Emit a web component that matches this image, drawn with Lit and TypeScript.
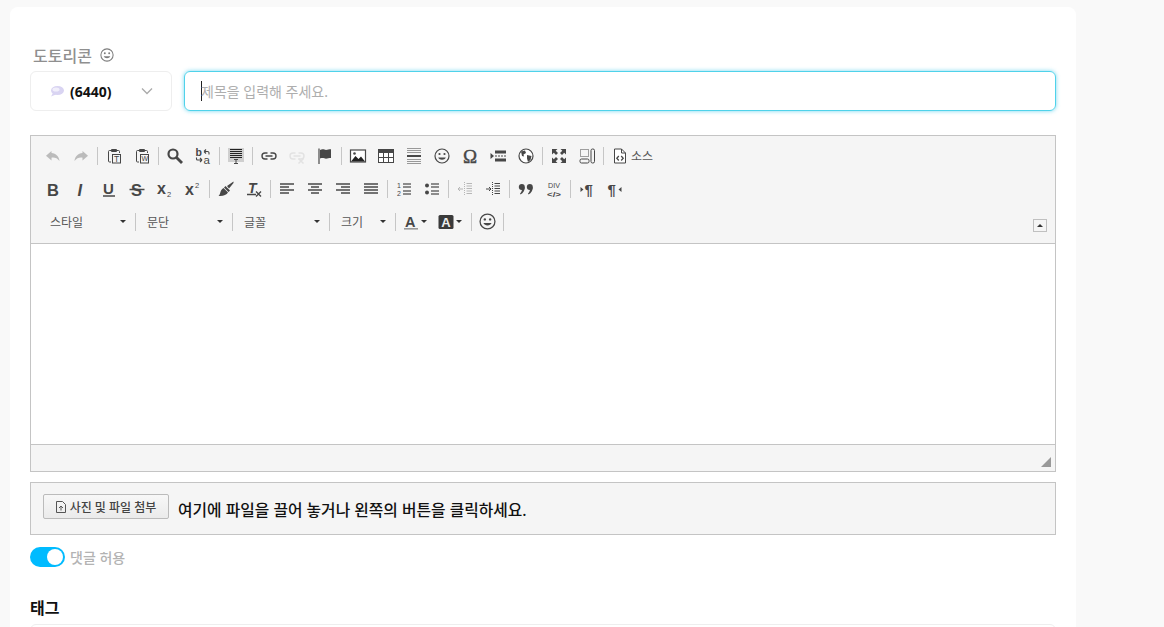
import { LitElement, html, svg, css } from "lit";
import { customElement } from "lit/decorators.js";

const C = "#474747";
const lines = (ys: number[], x1 = 1, x2 = 15, w = 1.5, c = C) =>
  ys.map((y) => svg`<line x1=${x1} x2=${x2} y1=${y} y2=${y} stroke=${c} stroke-width=${w} />`);
const glyph = (t: string, x: number, y: number, size: number, extra = "") =>
  svg`<text x=${x} y=${y} font-size=${size} fill=${C} font-family="Liberation Sans, sans-serif" style=${extra}>${t}</text>`;
const clip = svg`<path d="M5 2.500H3.500a1 1 0 0 0-1 1V13a1 1 0 0 0 1 1H5M11 2.500h1.500a1 1 0 0 1 1 1V5" fill="none" stroke=${C} /><rect x="5" y="1" width="6" height="3" rx="1" fill=${C} /><rect x="6.500" y="6.500" width="8" height="8.500" fill="#f5f5f5" stroke=${C} />`;
const chain = svg`<path d="M6.500 5H4a2.800 2.800 0 0 0 0 6h2.500M9.500 5H12a2.800 2.800 0 0 1 0 6H9.500M4.500 8h7" fill="none" stroke="currentColor" stroke-width="1.400" />`;
const smile = svg`<circle cx="8" cy="8" r="7" fill="none" stroke=${C} stroke-width="1.200" /><circle cx="5.500" cy="6" r="1.100" fill=${C} /><circle cx="10.500" cy="6" r="1.100" fill=${C} /><path d="M4.200 9.500c1 3 6.600 3 7.600 0z" fill=${C} />`;

const ICONS: Record<string, unknown> = {
  undo: svg`<path d="M6.500 3 1 7.800l5.500 4.700V9.700c3.500-.4 5.800.6 8 3.300-.6-4.600-3.500-7.400-8-7.900z" fill=${C} />`,
  redo: svg`<path d="M9.500 3 15 7.800l-5.500 4.700V9.700c-3.500-.4-5.800.6-8 3.300.6-4.600 3.500-7.400 8-7.900z" fill=${C} />`,
  pasteText: svg`${clip}${glyph("T", 8, 13.500, 8.500)}`,
  pasteWord: svg`${clip}${glyph("W", 7.400, 13.300, 7)}`,
  find: svg`<circle cx="6" cy="6" r="4.500" fill="none" stroke=${C} stroke-width="2.200" /><path d="M9.500 9.500 15 15" stroke=${C} stroke-width="2.800" />`,
  replace: svg`${glyph("b", 0.500, 8, 10.500, "font-weight:700")}${glyph("a", 8.500, 16, 11.500)}<path d="M9 3.500h3.500a1.500 1.500 0 0 1 1.500 1.500v1.500M9 3.500 11 1.500M9 3.500 11 5.500M1.500 9.500V11a1 1 0 0 0 1 1H7M7 12 5 10M7 12 5 14" fill="none" stroke=${C} stroke-width="1.100" />`,
  selectAll: svg`<rect x="0" y="0" width="16" height="14" fill="#cfcfcf" />${lines([1.500, 3.500, 5.500, 7.500, 9.500], 2, 14, 1, "#222")}<path d="M6 15.500h4M8 11.500v4M6 11.500h4" stroke=${C} />`,
  link: svg`<g color=${C}>${chain}</g>`,
  unlink: svg`<g color="#bdbdbd">${chain}</g><path d="M9.500 10.500 14.500 15.500M14.500 10.500 9.500 15.500" stroke="#bdbdbd" stroke-width="1.500" />`,
  flag: svg`<path d="M2 0.500V16" stroke=${C} stroke-width="1.200" /><path d="M3 2c3-1.500 4.500 0 6 0s3-.7 5-.7V10c-2 0-3.500.7-5 .7S6 9.500 3 10.500z" fill=${C} />`,
  image: svg`<rect x="0.500" y="2" width="15" height="12" fill="#fff" stroke=${C} stroke-width="1.200" /><path d="M1 13.500 5.500 8l3 3 2.500-2.500 4 5z" fill="#222" /><circle cx="4.500" cy="5.500" r="1.300" fill=${C} />`,
  table: svg`<rect x="0.500" y="1.500" width="15" height="13" fill="#fff" stroke=${C} /><rect x="0.500" y="1.500" width="15" height="3.500" fill=${C} /><path d="M5.500 5v9.500M10.500 5v9.500M1 9.500h14" stroke=${C} />`,
  hr: svg`${lines([0.500, 2.500, 4.500], 1, 15, 1, "#999")}${lines([8], 1, 15, 2, C)}${lines([11.500, 13.500, 15.500], 1, 15, 1, "#999")}`,
  smiley: smile,
  omega: svg`<text x="8" y="14.500" text-anchor="middle" font-size="19" fill=${C} stroke=${C} stroke-width="0.400" font-family="Liberation Serif, serif">Ω</text>`,
  pagebreak: svg`<path d="M0.500 5 4 8l-3.500 3z" fill=${C} /><rect x="5" y="2.500" width="11" height="3" fill=${C} /><rect x="5" y="10.500" width="11" height="3" fill=${C} /><path d="M5 8h11" stroke=${C} stroke-dasharray="2 1" />`,
  globe: svg`<circle cx="8" cy="8" r="7" fill="#fff" stroke=${C} stroke-width="1.200" /><path d="M3 3.500 7 2.500 8 5 5.500 6.500 6 8.500 4 8zM9 7l4.500 1-1 4-2.500 2-1-3.500z" fill=${C} />`,
  maximize: svg`<path d="M1 1h5.500L4.700 2.800 7 5 5 7 2.800 4.700 1 6.500zM15 1v5.500l-1.800-1.800L11 7 9 5l2.300-2.200L9.500 1zM1 15V9.500l1.800 1.800L5 9l2 2-2.300 2.200L6.500 15zM15 15H9.500l1.800-1.800L9 11l2-2 2.200 2.300L15 9.500z" fill=${C} />`,
  blocks: svg`<path d="M1.500 1.500h8v7h-8z" fill="none" stroke=${C} stroke-dasharray="1 1" /><rect x="1" y="11" width="9" height="4" rx="1.500" fill="none" stroke=${C} /><rect x="12" y="1" width="3.500" height="14" rx="1.500" fill="none" stroke=${C} />`,
  source: svg`<path d="M2.500 1h7l4 4v10h-11z" fill="#fff" stroke=${C} /><path d="M9.500 1v4h4" fill="none" stroke=${C} /><path d="M6.800 8 4.800 10.300l2 2.200M9.200 8l2 2.300-2 2.200" fill="none" stroke=${C} stroke-width="1.300" />`,
  bold: glyph("B", 2, 14.500, 16.500, "font-weight:700"),
  italic: glyph("I", 4.500, 14.500, 16.500, "font-weight:700;font-style:italic"),
  underline: svg`${glyph("U", 2, 12.500, 15, "font-weight:700")}<path d="M2 15h12" stroke=${C} stroke-width="1.500" />`,
  strike: svg`${glyph("S", 2, 14.500, 16.500, "font-weight:700")}<path d="M0.500 8.500h15" stroke=${C} stroke-width="1.500" />`,
  sub: svg`${glyph("x", 0, 12.500, 16, "font-weight:700")}${glyph("2", 10, 15.500, 7.500)}`,
  sup: svg`${glyph("x", 0, 14, 16, "font-weight:700")}${glyph("2", 10, 7, 7.500)}`,
  brush: svg`<path d="M15.500 0.500 9 5 11 7.500 15.500 2zM7.500 5 12 9.500 10.500 11 6 6.500zM5.500 7 10 11.500C8.500 14 5 15.500 0.500 15c2.500-2 1-5.500 5-8z" fill=${C} />`,
  removeFormat: svg`${glyph("T", 2, 11.500, 14, "font-weight:700;font-style:italic")}<path d="M1 13.500h9" stroke=${C} stroke-width="1.500" /><path d="M10 10.500 15 15.500M15 10.500 10 15.500" stroke=${C} stroke-width="1.400" />`,
  alignLeft: lines([3, 9], 1, 15).concat(lines([6, 12], 1, 10)),
  alignCenter: lines([3, 9], 1, 15).concat(lines([6, 12], 4, 12)),
  alignRight: lines([3, 9], 1, 15).concat(lines([6, 12], 6, 15)),
  alignBlock: lines([3, 6, 9, 12], 1, 15),
  ol: svg`${glyph("1", 1, 7, 7)}${glyph("2", 1, 14.500, 7)}${lines([3, 6, 10, 13], 7, 15, 1.200)}`,
  ul: svg`<circle cx="3" cy="4.500" r="2" fill=${C} /><circle cx="3" cy="11.500" r="2" fill=${C} />${lines([3, 6, 10, 13], 7, 15, 1.200)}`,
  outdent: svg`<g opacity="0.350"><path d="M7.500 1v14" stroke=${C} stroke-dasharray="1 1" />${lines([2.500, 5, 7.500, 10, 12.500], 9.500, 15, 1)}<path d="M1 8h5M1 8l2-2M1 8l2 2" fill="none" stroke=${C} /></g>`,
  indent: svg`<path d="M7.500 1v14" stroke=${C} stroke-dasharray="1 1" />${lines([2.500, 5, 7.500, 10, 12.500], 9.500, 15, 1)}<path d="M1 8h5M6 8 4 6M6 8l-2 2" fill="none" stroke=${C} />`,
  quote: svg`<circle cx="3.800" cy="6" r="3" fill=${C} /><path d="M6.800 6c0 3.500-1.500 6-4.300 7.500L2 12.500C3.500 11 4 9.500 4 8z" fill=${C} /><circle cx="11.800" cy="6" r="3" fill=${C} /><path d="M14.800 6c0 3.500-1.500 6-4.300 7.500l-.5-1c1.500-1.500 2-3 2-4.500z" fill=${C} />`,
  div: svg`<text x="2" y="6.800" font-size="7.500" fill=${C} font-family="Liberation Sans, sans-serif" textLength="12" lengthAdjust="spacingAndGlyphs">DIV</text><text x="1" y="15.800" font-size="7.500" font-weight="700" fill=${C} font-family="Liberation Sans, sans-serif" textLength="14" lengthAdjust="spacingAndGlyphs">&lt;/&gt;</text>`,
  ltr: svg`<path d="M1.500 6 4.500 8.500 1.500 11z" fill=${C} />${glyph("¶", 5.500, 14, 15, "font-weight:700")}`,
  rtl: svg`${glyph("¶", 0.500, 14, 15, "font-weight:700")}<path d="M14.500 6 11.500 8.500 14.500 11z" fill=${C} />`,
  textColor: svg`${glyph("A", 2, 12.500, 14.500, "font-weight:700")}<rect x="1" y="14" width="14" height="1.600" fill="#999" />`,
  bgColor: svg`<rect x="0.500" y="1" width="15" height="14" rx="1.500" fill="#3a3a3a" /><text x="8" y="13" text-anchor="middle" font-size="13" font-weight="700" fill="#eee" font-family="Liberation Sans, sans-serif">A</text>`,
};

const ROW1 = [
  ["undo", "redo"],
  ["pasteText", "pasteWord"],
  ["find", "replace"],
  ["selectAll"],
  ["link", "unlink", "flag"],
  ["image", "table", "hr", "smiley", "omega", "pagebreak", "globe"],
  ["maximize", "blocks"],
];
const ROW2 = [
  ["bold", "italic", "underline", "strike", "sub", "sup"],
  ["brush", "removeFormat"],
  ["alignLeft", "alignCenter", "alignRight", "alignBlock"],
  ["ol", "ul"],
  ["outdent", "indent"],
  ["quote", "div"],
  ["ltr", "rtl"],
];
const COMBOS = [
  ["스타일", 92],
  ["문단", 92],
  ["글꼴", 92],
  ["크기", 61],
];
const DISABLED = ["undo", "redo", "unlink"];

@customElement("app-root")
export class AppRoot extends LitElement {
  static styles = css`
    :host {
      display: block;
      height: 627px;
      overflow: hidden;
      background: #f9f9f9;
      font-family: "Noto Sans", "Noto Sans CJK KR", sans-serif;
    }
    .card {
      box-sizing: border-box;
      width: 1066px;
      height: 640px;
      margin-left: 10px;
      padding: 36px 20px 0;
      position: relative;
      top: 7px;
      background: #fff;
      border-radius: 8px;
    }
    .label {
      box-sizing: border-box;
      display: flex;
      align-items: center;
      gap: 8px;
      height: 28px;
      padding: 0 0 4px 3px;
      font-size: 16px;
      font-weight: 500;
      color: #8f8f8f;
    }
    .label svg {
      width: 14px;
      height: 14px;
      opacity: 0.7;
    }
    .title-row {
      display: flex;
      gap: 12px;
      height: 40px;
    }
    .select {
      box-sizing: border-box;
      width: 142px;
      display: flex;
      align-items: center;
      padding-left: 19px;
      border: 1px solid #eee;
      border-radius: 6px;
      font-size: 14px;
      font-weight: 700;
      color: #111;
    }
    .select .bubble {
      width: 14px;
      height: 12px;
      margin-right: 6px;
    }
    .select .chev {
      width: 12px;
      height: 8px;
      margin-left: 29px;
    }
    .input {
      flex: 1;
      box-sizing: border-box;
      display: flex;
      align-items: center;
      padding-left: 16px;
      border: 1px solid #4fd2ea;
      border-radius: 6px;
      box-shadow: 0 0 4px rgba(60, 200, 235, 0.7);
      font-size: 14px;
      color: #aeaeae;
    }
    .caret {
      width: 1px;
      height: 20px;
      margin-right: -1px;
      background: #222;
    }
    .editor {
      margin-top: 24px;
      border: 1px solid #c4c4c4;
    }
    .toolbar {
      padding: 3px 0 5px 8px;
      background: #f5f5f5;
      border-bottom: 1px solid #c4c4c4;
    }
    .row {
      display: flex;
      align-items: center;
      height: 33px;
    }
    .btn {
      width: 28px;
      display: flex;
      justify-content: center;
    }
    .btn svg {
      width: 16px;
      height: 16px;
      overflow: visible;
    }
    .btn.off svg {
      opacity: 0.33;
    }
    .sep {
      flex: none;
      width: 1px;
      height: 18px;
      margin: 0 2px;
      background: #c6c6c6;
    }
    .source-text {
      margin-left: -3px;
      font-size: 12px;
      color: #555;
    }
    .combo {
      box-sizing: border-box;
      display: flex;
      align-items: center;
      justify-content: space-between;
      padding: 0 7px 0 9px;
      font-size: 12px;
      color: #555;
    }
    .combo.first {
      margin-left: 2px;
    }
    .arrow {
      width: 0;
      height: 0;
      border: 3px solid transparent;
      border-top: 3px solid #333;
      border-bottom: 0;
    }
    .color {
      box-sizing: border-box;
      width: 35px;
      display: flex;
      align-items: center;
      gap: 2px;
      padding-left: 5px;
    }
    .color svg {
      width: 16px;
      height: 16px;
    }
    .color.second {
      width: 36px;
    }
    .emoji {
      width: 27px;
      display: flex;
      justify-content: center;
    }
    .emoji svg {
      width: 17px;
      height: 17px;
    }
    .collapse {
      box-sizing: border-box;
      width: 14px;
      height: 13px;
      margin: 0 8px 6px auto;
      align-self: flex-end;
      display: flex;
      align-items: center;
      justify-content: center;
      border: 1px solid #c0c0c0;
    }
    .collapse i {
      width: 0;
      height: 0;
      border: 3px solid transparent;
      border-bottom: 3px solid #333;
      border-top: 0;
    }
    .content {
      height: 200px;
      background: #fff;
    }
    .footer {
      box-sizing: border-box;
      height: 27px;
      display: flex;
      justify-content: flex-end;
      align-items: flex-end;
      padding: 0 4px 4px 0;
      background: #f5f5f5;
      border-top: 1px solid #c4c4c4;
    }
    .footer svg {
      width: 10px;
      height: 10px;
    }
    .attach {
      box-sizing: border-box;
      height: 53px;
      margin-top: 10px;
      display: flex;
      align-items: center;
      gap: 9px;
      padding-left: 12px;
      background: #f5f5f5;
      border: 1px solid #c4c4c4;
      font-size: 15.8px;
      font-weight: 500;
      color: #111;
    }
    .attach-text {
      margin-top: 2px;
    }
    .attach-btn {
      box-sizing: border-box;
      width: 126px;
      height: 25px;
      margin-top: -4px;
      padding-top: 1px;
      display: flex;
      align-items: center;
      justify-content: center;
      gap: 4px;
      background: linear-gradient(#f7f7f7, #ebebeb);
      border: 1px solid #bbb;
      border-radius: 2px;
      font-size: 12px;
      font-weight: 500;
      color: #444;
    }
    .attach-btn svg {
      width: 10px;
      height: 12px;
    }
    .toggle-row {
      display: flex;
      align-items: center;
      gap: 5px;
      margin-top: 12px;
      font-size: 14px;
      font-weight: 500;
      color: #b3b3b3;
    }
    .toggle {
      box-sizing: border-box;
      width: 35px;
      height: 20px;
      display: flex;
      justify-content: flex-end;
      align-items: center;
      padding-right: 2px;
      background: #00bbff;
      border-radius: 10px;
    }
    .toggle i {
      width: 16px;
      height: 16px;
      background: #fff;
      border-radius: 50%;
    }
    .tag-title {
      margin-top: 30px;
      font-size: 16px;
      font-weight: 700;
      line-height: 22px;
      color: #111;
    }
    .tag-input {
      height: 40px;
      margin-top: 5px;
      border: 1px solid #eee;
      border-radius: 6px;
    }
  `;

  icon(name: string) {
    return html`<span class="btn ${DISABLED.includes(name) ? "off" : ""}"
      ><svg viewBox="0 0 16 16">${ICONS[name]}</svg></span
    >`;
  }

  renderGroups(groups: string[][]) {
    return groups.map(
      (g, i) => html`${i ? html`<span class="sep"></span>` : ""}${g.map((n) => this.icon(n))}`
    );
  }

  render() {
    return html`
      <div class="card">
        <div class="label">
          도토리콘
          <svg viewBox="0 0 16 16">${ICONS.smiley}</svg>
        </div>
        <div class="title-row">
          <div class="select">
            <svg class="bubble" viewBox="0 0 14 12">
              <ellipse cx="7.500" cy="5.500" rx="6.500" ry="4.500" fill="#d9d4f2" />
              <path d="M3 8 1 11.500 6 9.500z" fill="#d9d4f2" />
              <ellipse cx="6" cy="4.500" rx="3.500" ry="2" fill="#f1effb" />
            </svg>
            (6440)
            <svg class="chev" viewBox="0 0 12 8">
              <path d="M1 1.500 6 6.500 11 1.500" fill="none" stroke="#aaa" stroke-width="1.300" />
            </svg>
          </div>
          <div class="input"><span class="caret"></span>제목을 입력해 주세요.</div>
        </div>
        <div class="editor">
          <div class="toolbar">
            <div class="row">
              ${this.renderGroups(ROW1)}
              <span class="sep"></span>
              ${this.icon("source")}
              <span class="source-text">소스</span>
            </div>
            <div class="row">${this.renderGroups(ROW2)}</div>
            <div class="row">
              ${COMBOS.map(
                ([t, w], i) => html`<span
                    class="combo ${i ? "" : "first"}"
                    style="width:${w}px"
                    >${t}<i class="arrow"></i></span
                  ><span class="sep"></span>`
              )}
              <span class="color"
                ><svg viewBox="0 0 16 16">${ICONS.textColor}</svg><i class="arrow"></i
              ></span>
              <span class="color second"
                ><svg viewBox="0 0 16 16">${ICONS.bgColor}</svg><i class="arrow"></i
              ></span>
              <span class="sep"></span>
              <span class="emoji"><svg viewBox="0 0 16 16">${ICONS.smiley}</svg></span>
              <span class="sep"></span>
              <span class="collapse"><i></i></span>
            </div>
          </div>
          <div class="content"></div>
          <div class="footer">
            <svg viewBox="0 0 10 10"><path d="M10 0V10H0z" fill="#999" /></svg>
          </div>
        </div>
        <div class="attach">
          <span class="attach-btn">
            <svg viewBox="0 0 10 12">
              <path d="M0.500 0.500h6l3 3v8h-9z" fill="none" stroke="#555" />
              <path d="M5 9.500V5M3 7l2-2 2 2" fill="none" stroke="#555" />
            </svg>
            사진 및 파일 첨부
          </span>
          <span class="attach-text">여기에 파일을 끌어 놓거나 왼쪽의 버튼을 클릭하세요.</span>
        </div>
        <div class="toggle-row">
          <span class="toggle"><i></i></span>
          댓글 허용
        </div>
        <div class="tag-title">태그</div>
        <div class="tag-input"></div>
      </div>
    `;
  }
}
